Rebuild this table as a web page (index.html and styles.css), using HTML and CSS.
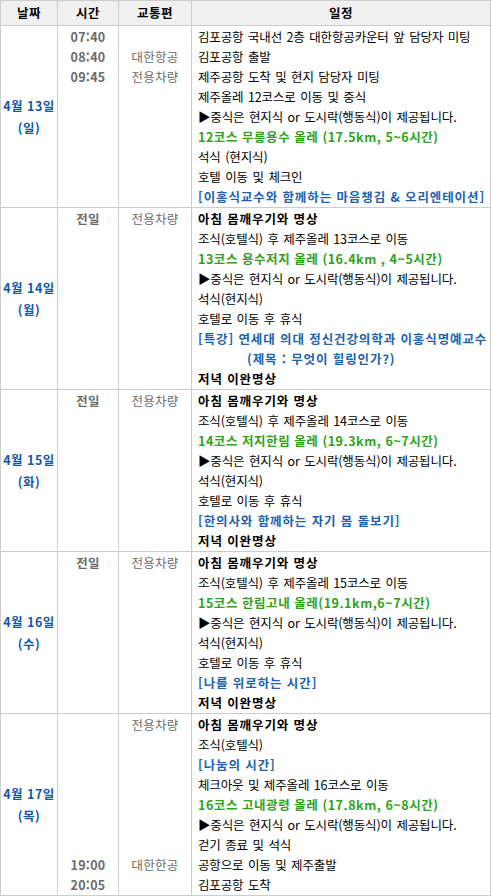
FILE: index.html
```html
<!DOCTYPE html>
<html lang="ko">
<head>
<meta charset="utf-8">
<title>일정표</title>
<link rel="stylesheet" href="styles.css">
</head>
<body>
<table class="sched">
  <colgroup>
    <col class="c-date"><col class="c-time"><col class="c-trans"><col class="c-plan">
  </colgroup>
  <thead>
    <tr><th>날짜</th><th>시간</th><th>교통편</th><th>일정</th></tr>
  </thead>
  <tbody>
    <tr>
      <td class="date">4월 13일<br>(일)</td>
      <td class="time"><div class="ln">07:40</div><div class="ln">08:40</div><div class="ln">09:45</div></td>
      <td class="trans"><div class="ln">&nbsp;</div><div class="ln">대한항공</div><div class="ln">전용차량</div></td>
      <td class="plan">
        <div class="ln">김포공항 국내선 2층 대한항공카운터 앞 담당자 미팅</div>
        <div class="ln">김포공항 출발</div>
        <div class="ln">제주공항 도착 및 현지 담당자 미팅</div>
        <div class="ln">제주올레 12코스로 이동 및 중식</div>
        <div class="ln">▶중식은 현지식 or 도시락(행동식)이 제공됩니다.</div>
        <div class="ln green">12코스 무릉용수 올레 (17.5km, 5~6시간)</div>
        <div class="ln">석식 (현지식)</div>
        <div class="ln">호텔 이동 및 체크인</div>
        <div class="ln blue">[이홍식교수와 함께하는 마음챙김 &amp; 오리엔테이션]</div>
      </td>
    </tr>
    <tr>
      <td class="date">4월 14일<br>(월)</td>
      <td class="time"><div class="ln">전일</div></td>
      <td class="trans"><div class="ln">전용차량</div></td>
      <td class="plan">
        <div class="ln bold">아침 몸깨우기와 명상</div>
        <div class="ln">조식(호텔식) 후 제주올레 13코스로 이동</div>
        <div class="ln green">13코스 용수저지 올레 (16.4km , 4~5시간)</div>
        <div class="ln">▶중식은 현지식 or 도시락(행동식)이 제공됩니다.</div>
        <div class="ln">석식(현지식)</div>
        <div class="ln">호텔로 이동 후 휴식</div>
        <div class="ln blue">[특강] 연세대 의대 정신건강의학과 이홍식명예교수</div>
        <div class="ln blue indent">(제목 : 무엇이 힐링인가?)</div>
        <div class="ln bold">저녁 이완명상</div>
      </td>
    </tr>
    <tr>
      <td class="date">4월 15일<br>(화)</td>
      <td class="time"><div class="ln">전일</div></td>
      <td class="trans"><div class="ln">전용차량</div></td>
      <td class="plan">
        <div class="ln bold">아침 몸깨우기와 명상</div>
        <div class="ln">조식(호텔식) 후 제주올레 14코스로 이동</div>
        <div class="ln green">14코스 저지한림 올레 (19.3km, 6~7시간)</div>
        <div class="ln">▶중식은 현지식 or 도시락(행동식)이 제공됩니다.</div>
        <div class="ln">석식(현지식)</div>
        <div class="ln">호텔로 이동 후 휴식</div>
        <div class="ln blue">[한의사와 함께하는 자기 몸 돌보기]</div>
        <div class="ln bold">저녁 이완명상</div>
      </td>
    </tr>
    <tr>
      <td class="date">4월 16일<br>(수)</td>
      <td class="time"><div class="ln">전일</div></td>
      <td class="trans"><div class="ln">전용차량</div></td>
      <td class="plan">
        <div class="ln bold">아침 몸깨우기와 명상</div>
        <div class="ln">조식(호텔식) 후 제주올레 15코스로 이동</div>
        <div class="ln green">15코스 한림고내 올레(19.1km,6~7시간)</div>
        <div class="ln">▶중식은 현지식 or 도시락(행동식)이 제공됩니다.</div>
        <div class="ln">석식(현지식)</div>
        <div class="ln">호텔로 이동 후 휴식</div>
        <div class="ln blue">[나를 위로하는 시간]</div>
        <div class="ln bold">저녁 이완명상</div>
      </td>
    </tr>
    <tr>
      <td class="date">4월 17일<br>(목)</td>
      <td class="time">
        <div class="ln">&nbsp;</div><div class="ln">&nbsp;</div><div class="ln">&nbsp;</div><div class="ln">&nbsp;</div>
        <div class="ln">&nbsp;</div><div class="ln">&nbsp;</div><div class="ln">&nbsp;</div>
        <div class="ln">19:00</div><div class="ln">20:05</div>
      </td>
      <td class="trans">
        <div class="ln">전용차량</div>
        <div class="ln">&nbsp;</div><div class="ln">&nbsp;</div><div class="ln">&nbsp;</div>
        <div class="ln">&nbsp;</div><div class="ln">&nbsp;</div><div class="ln">&nbsp;</div>
        <div class="ln">대한한공</div>
      </td>
      <td class="plan">
        <div class="ln bold">아침 몸깨우기와 명상</div>
        <div class="ln">조식(호텔식)</div>
        <div class="ln blue">[나눔의 시간]</div>
        <div class="ln">체크아웃 및 제주올레 16코스로 이동</div>
        <div class="ln green">16코스 고내광령 올레 (17.8km, 6~8시간)</div>
        <div class="ln">▶중식은 현지식 or 도시락(행동식)이 제공됩니다.</div>
        <div class="ln">걷기 종료 및 석식</div>
        <div class="ln">공항으로 이동 및 제주출발</div>
        <div class="ln">김포공항 도착</div>
      </td>
    </tr>
  </tbody>
</table>
</body>
</html>
```
FILE: styles.css
```css
html, body {
  margin: 0;
  padding: 0;
  background: #fff;
}
body {
  font-family: "Noto Sans CJK KR", "Noto Sans", sans-serif;
  font-size: 12.5px;
  color: #000;
}
.sched {
  border-collapse: collapse;
  table-layout: fixed;
  width: 490px;
}
.c-date { width: 57px; }
.c-time { width: 61px; }
.c-trans { width: 73px; }
.c-plan { width: 299px; }
.sched th,
.sched td {
  border: 1px solid #cdcdcd;
  padding: 0;
  vertical-align: top;
}
.sched th {
  height: 24px;
  background: #f0f0f0;
  font-weight: bold;
  text-align: center;
  vertical-align: middle;
  line-height: 20px;
  letter-spacing: 0.5px;
}
.sched td {
  padding-top: 1px;
}
.ln {
  line-height: 20px;
  height: 20px;
  white-space: nowrap;
  letter-spacing: -0.15px;
  word-spacing: 1.2px;
}
.date {
  text-align: center;
  vertical-align: middle !important;
  color: #1756a6;
  font-weight: bold;
  line-height: 22px;
  letter-spacing: 0.5px;
}
.time {
  text-align: center;
  color: #6a6a6a;
  font-weight: bold;
}
.time .ln { letter-spacing: 0.3px; word-spacing: 0; }
.trans {
  text-align: center;
  color: #6a6a6a;
}
.trans .ln { letter-spacing: 0.2px; word-spacing: 0; }
.plan {
  padding-left: 6px !important;
}
.plan .bold { font-weight: bold; letter-spacing: 0.9px; word-spacing: 0; }
.plan .green { color: #2ea21b; font-weight: bold; letter-spacing: 0.55px; word-spacing: 0; }
.plan .blue { color: #1c62ad; font-weight: bold; letter-spacing: 0.9px; word-spacing: 0; }
.plan .indent { padding-left: 49px; }
```
